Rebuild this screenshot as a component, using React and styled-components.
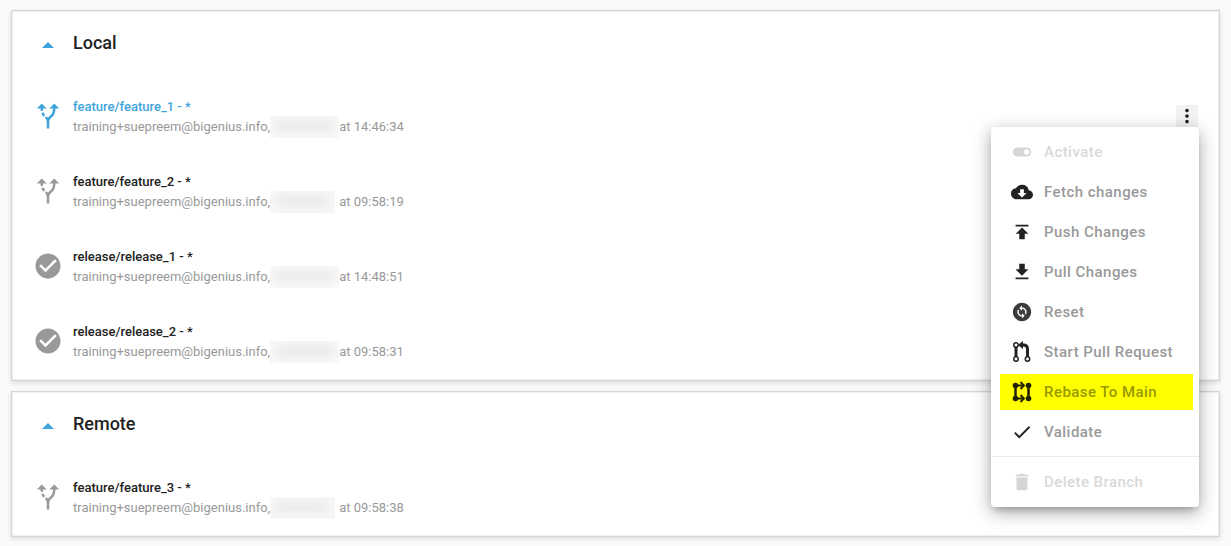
import React from "react";
import styled, { createGlobalStyle, css } from "styled-components";
import {
  MdAltRoute,
  MdChangeCircle,
  MdCheck,
  MdCheckCircle,
  MdCloudDownload,
  MdDelete,
  MdFileDownload,
  MdMoreVert,
  MdPublish,
  MdToggleOn,
} from "react-icons/md";

const GlobalStyle = createGlobalStyle`
  * { box-sizing: border-box; }
  body {
    margin: 0;
    background: #fafafa;
    color: #222;
    font-family: Roboto, "Liberation Sans", sans-serif;
  }
`;

const Page = styled.main`
  display: flex;
  flex-direction: column;
  gap: 10px;
  padding: 10px 11px 9px;
`;

const Card = styled.section`
  padding-bottom: 1px;
  background: #fff;
  border: 1px solid #d6d6d6;
  box-shadow: inset 0 0 0 1px #f0f0f0, 0 2px 5px rgba(0, 0, 0, 0.12);
`;

const CardHeader = styled.header`
  display: flex;
  align-items: center;
  gap: 9px;
  height: 64px;
  margin-bottom: 4px;
  padding: 0 20px;
`;

const CollapseButton = styled.button`
  display: flex;
  align-items: center;
  justify-content: center;
  width: 32px;
  height: 32px;
  padding: 4px 0 0;
  border: 0;
  background: none;
  color: #3ea4dc;
  cursor: pointer;
`;

const CardTitle = styled.h2`
  margin: 0;
  font-size: 18px;
  line-height: 24px;
  font-weight: 500;
`;

const BranchList = styled.ul`
  margin: 0;
  padding: 0;
  list-style: none;
`;

const BranchRow = styled.li`
  display: flex;
  align-items: center;
  gap: 9px;
  height: 75px;
  padding: 0 21px 1px 20px;
`;

const BranchIcon = styled.span`
  display: flex;
  justify-content: center;
  width: 32px;
  color: ${(p) => (p.$active ? "#3ea4dc" : "#999")};
`;

const BranchText = styled.div`
  flex: 1;
  padding-top: 2px;
  font-size: 13px;
  line-height: 20px;
`;

const BranchName = styled.div`
  font-weight: 500;
  color: ${(p) => (p.$active ? "#3ea4dc" : "#222")};
`;

const BranchMeta = styled.div`
  display: flex;
  align-items: center;
  height: 20px;
  color: #999;
`;

const HiddenDate = styled.span`
  width: ${(p) => (p.$short ? "65px" : "69px")};
  height: 22px;
  margin-right: ${(p) => (p.$short ? "4px" : "0")};
  overflow: hidden;
  background: #f8f8f8;

  &::before {
    content: "";
    display: block;
    height: 10px;
    margin: 5px 6px;
    background: #e8e8e8;
    filter: blur(5px);
  }
`;

const MenuAnchor = styled.div`
  position: relative;
`;

const MenuTrigger = styled.button`
  display: flex;
  align-items: center;
  justify-content: center;
  width: 22px;
  height: 22px;
  padding: 0;
  border: 0;
  background: #f2f2f2;
  color: #222;
  cursor: pointer;
`;

const Menu = styled.ul`
  position: absolute;
  z-index: 1;
  top: 100%;
  right: -1px;
  width: 208px;
  margin: 0;
  padding: 5px 0;
  list-style: none;
  background: #fff;
  border-radius: 4px;
  box-shadow: 0 5px 6px -3px rgba(0, 0, 0, 0.2),
    0 5px 18px rgba(0, 0, 0, 0.36);
`;

const MenuItem = styled.li`
  padding: 2px 6px 2px 9px;
`;

const MenuDivider = styled.li`
  height: 1px;
  margin: 4px 0 5px;
  background: #ececec;
`;

const MenuButton = styled.button`
  display: flex;
  align-items: center;
  gap: 11px;
  width: 100%;
  height: 36px;
  padding: 0 0 0 11px;
  border: 0;
  background: none;
  color: #999;
  font: 500 15px/20px Roboto, "Liberation Sans", sans-serif;
  letter-spacing: 0.03em;
  white-space: nowrap;
  text-align: left;
  cursor: pointer;

  svg {
    flex: none;
    color: ${(p) => p.$iconColor || "#222"};
  }

  &:disabled {
    color: #d9d9d9;
    cursor: default;

    svg {
      color: #d6d6d6;
    }
  }

  ${(p) =>
    p.$highlighted &&
    css`
      background: #ff0;
      color: #999900;

      svg {
        color: #222200;
      }
    `}
`;

function CaretUp() {
  return (
    <svg width="12" height="6" viewBox="0 0 12 6" aria-hidden="true">
      <path d="M0 6 6 0l6 6z" fill="currentColor" />
    </svg>
  );
}

function PullRequestIcon() {
  return (
    <svg width="22" height="22" viewBox="0 0 22 22" fill="none" stroke="currentColor" aria-hidden="true">
      <path d="M5 5.5v11" strokeWidth="3" />
      <path d="M16.500 17V8Q16.500 4 12.500 4H10" strokeWidth="3" />
      <path d="M7 4 12 0v8z" fill="currentColor" stroke="none" />
      <circle cx="5" cy="4" r="2.200" strokeWidth="1.500" fill="#fff" />
      <circle cx="5" cy="18" r="2.200" strokeWidth="1.500" fill="#fff" />
      <circle cx="16.500" cy="18" r="2.200" strokeWidth="1.500" fill="#fff" />
    </svg>
  );
}

function RebaseIcon() {
  return (
    <svg width="22" height="22" viewBox="0 0 22 22" fill="none" stroke="currentColor" aria-hidden="true">
      <path d="M4.500 4.500v13M17.500 4.500v13" strokeWidth="2.500" />
      <path d="M4.500 4.500h8M4.500 17.500h8" strokeWidth="1.800" />
      <path d="m9.500 1 3.500 3.500L9.500 8M9.500 14l3.500 3.500L9.500 21" strokeWidth="1.800" />
      <g fill="currentColor" stroke="none">
        <circle cx="4.500" cy="4.500" r="2.800" />
        <circle cx="17.500" cy="4.500" r="2.800" />
        <circle cx="4.500" cy="17.500" r="2.800" />
        <circle cx="17.500" cy="17.500" r="2.800" />
      </g>
    </svg>
  );
}

const actions = [
  { label: "Activate", icon: MdToggleOn, disabled: true },
  { label: "Fetch changes", icon: MdCloudDownload },
  { label: "Push Changes", icon: MdPublish },
  { label: "Pull Changes", icon: MdFileDownload },
  { label: "Reset", icon: MdChangeCircle, iconColor: "#3c3c3c" },
  { label: "Start Pull Request", icon: PullRequestIcon },
  { label: "Rebase To Main", icon: RebaseIcon, highlighted: true },
  { label: "Validate", icon: MdCheck },
];

const localBranches = [
  { name: "feature/feature_1", time: "14:46:34", active: true, menu: true },
  { name: "feature/feature_2", time: "09:58:19", shortDate: true },
  { name: "release/release_1", time: "14:48:51", release: true },
  { name: "release/release_2", time: "09:58:31", release: true },
];

const remoteBranches = [
  { name: "feature/feature_3", time: "09:58:38", shortDate: true },
];

function Action({ label, icon: Icon, iconColor, disabled, highlighted }) {
  return (
    <MenuItem role="none">
      <MenuButton
        type="button"
        role="menuitem"
        disabled={disabled}
        $highlighted={highlighted}
        $iconColor={iconColor}
      >
        <Icon size={22} />
        {label}
      </MenuButton>
    </MenuItem>
  );
}

function BranchMenu() {
  return (
    <MenuAnchor>
      <MenuTrigger type="button" aria-label="Branch actions" aria-haspopup="menu" aria-expanded="true">
        <MdMoreVert size={22} />
      </MenuTrigger>
      <Menu role="menu">
        {actions.map((action) => (
          <Action key={action.label} {...action} />
        ))}
        <MenuDivider role="separator" />
        <Action label="Delete Branch" icon={MdDelete} disabled />
      </Menu>
    </MenuAnchor>
  );
}

function Branch({ name, time, active, release, shortDate, menu }) {
  return (
    <BranchRow>
      <BranchIcon $active={active}>
        {release ? <MdCheckCircle size={30} /> : <MdAltRoute size={30} />}
      </BranchIcon>
      <BranchText>
        <BranchName $active={active}>{name} - *</BranchName>
        <BranchMeta>
          <span>training+suepreem@bigenius.info,</span>
          <HiddenDate $short={shortDate} />
          <span>at {time}</span>
        </BranchMeta>
      </BranchText>
      {menu && <BranchMenu />}
    </BranchRow>
  );
}

function BranchCard({ title, branches }) {
  return (
    <Card>
      <CardHeader>
        <CollapseButton type="button" aria-label={`Collapse ${title}`} aria-expanded="true">
          <CaretUp />
        </CollapseButton>
        <CardTitle>{title}</CardTitle>
      </CardHeader>
      <BranchList>
        {branches.map((branch) => (
          <Branch key={branch.name} {...branch} />
        ))}
      </BranchList>
    </Card>
  );
}

export default function App() {
  return (
    <>
      <GlobalStyle />
      <Page>
        <BranchCard title="Local" branches={localBranches} />
        <BranchCard title="Remote" branches={remoteBranches} />
      </Page>
    </>
  );
}
